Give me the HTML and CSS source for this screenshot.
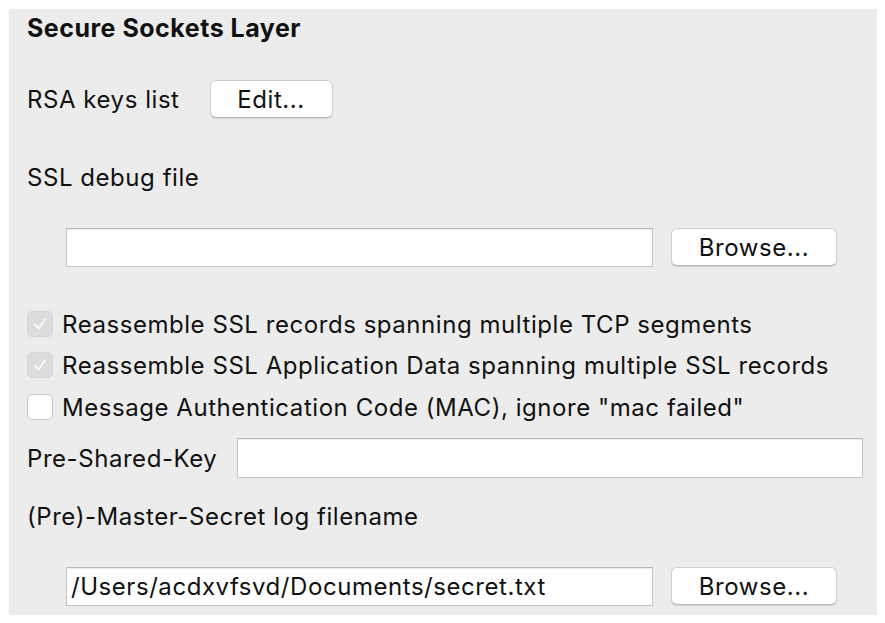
FILE: index.html
```html
<!DOCTYPE html>
<html>
<head>
<meta charset="utf-8">
<link rel="stylesheet" href="styles.css">
</head>
<body>
<div class="panel">
  <div class="row r-title"><span class="title">Secure Sockets Layer</span></div>
  <div class="row r-rsa">
    <span class="label">RSA keys list</span>
    <button class="btn btn-edit">Edit...</button>
  </div>
  <div class="row r-debug"><span class="label">SSL debug file</span></div>
  <div class="row r-field r-field1">
    <input class="field field-file" type="text" value="">
    <button class="btn btn-browse">Browse...</button>
  </div>
  <div class="row r-check r-check1">
    <span class="box checked"><svg viewBox="0 0 26 26" width="26" height="26"><path d="M7.5 13.5 L11.5 18 L18.5 7.5" fill="none" stroke="#fafafa" stroke-width="2" stroke-linecap="round" stroke-linejoin="round"/></svg></span>
    <span class="label">Reassemble SSL records spanning multiple TCP segments</span>
  </div>
  <div class="row r-check r-check2">
    <span class="box checked"><svg viewBox="0 0 26 26" width="26" height="26"><path d="M7.5 13.5 L11.5 18 L18.5 7.5" fill="none" stroke="#fafafa" stroke-width="2" stroke-linecap="round" stroke-linejoin="round"/></svg></span>
    <span class="label">Reassemble SSL Application Data spanning multiple SSL records</span>
  </div>
  <div class="row r-check r-check3">
    <span class="box"></span>
    <span class="label">Message Authentication Code (MAC), ignore "mac failed"</span>
  </div>
  <div class="row r-psk">
    <span class="label">Pre-Shared-Key</span>
    <input class="field field-psk" type="text" value="">
  </div>
  <div class="row r-master"><span class="label">(Pre)-Master-Secret log filename</span></div>
  <div class="row r-field r-field2">
    <input class="field field-file" type="text" value="/Users/acdxvfsvd/Documents/secret.txt">
    <button class="btn btn-browse">Browse...</button>
  </div>
</div>
</body>
</html>
```

FILE: styles.css
```css
html, body {
  margin: 0;
  padding: 0;
  background: #ffffff;
}
body {
  font-family: Inter, "Liberation Sans", Arial, sans-serif;
  font-size: 24px;
  letter-spacing: 0.55px;
  color: #111111;
}
.panel {
  margin: 9px 0 0 9px;
  width: 868px;
  height: 606px;
  background: #ececec;
  padding: 0 0 0 18px;
  box-sizing: border-box;
  display: flex;
  flex-direction: column;
}
.row {
  display: flex;
  align-items: center;
  height: 38px;
  flex: none;
}
.title {
  font-weight: 700;
  font-size: 25px;
  letter-spacing: 0.5px;
}
.r-title { margin-top: 0; }
.r-rsa { margin-top: 33px; }
.r-debug { margin-top: 40px; }
.r-field1 { margin-top: 31px; height: 40px; }
.r-check1 { margin-top: 38px; }
.r-check2 { margin-top: 3px; }
.r-check3 { margin-top: 4px; }
.r-psk { margin-top: 12px; height: 40px; }
.r-master { margin-top: 19px; }
.r-field2 { margin-top: 31px; height: 40px; }

.btn {
  font-family: inherit;
  font-size: 24px;
  letter-spacing: inherit;
  color: #111;
  background: #ffffff;
  border: 1px solid #cfcfcf;
  border-bottom-color: #b9b9b9;
  border-radius: 6px;
  box-shadow: 0 1px 1px rgba(0,0,0,0.12);
  height: 38px;
  padding: 0;
  margin: 0;
  flex: none;
}
.btn-edit {
  width: 123px;
  margin-left: 30px;
}
.btn-browse {
  width: 166px;
  margin-left: 18px;
}
.field {
  font-family: inherit;
  font-size: 24px;
  letter-spacing: inherit;
  color: #111;
  background: #ffffff;
  border: 1px solid #c4c4c4;
  border-top-color: #b8b8b8;
  box-shadow: inset 0 1px 0 #ececec;
  border-radius: 0;
  margin: 0;
  padding: 0 4px;
  box-sizing: border-box;
  outline: none;
  flex: none;
}
.field-file {
  width: 587px;
  height: 39px;
  margin-left: 39px;
}
.field-psk {
  width: 626px;
  height: 40px;
  margin-left: auto;
  margin-right: 14px;
}
.r-check .label {
  margin-left: 9px;
  white-space: nowrap;
}
.box {
  width: 26px;
  height: 26px;
  box-sizing: border-box;
  border-radius: 5px;
  background: #ffffff;
  border: 1px solid #c6c6c6;
  display: flex;
  align-items: center;
  justify-content: center;
  flex: none;
}
.box svg {
  display: block;
}
.box.checked {
  background: #dcdcdc;
  border-color: #d6d6d6;
}
```
